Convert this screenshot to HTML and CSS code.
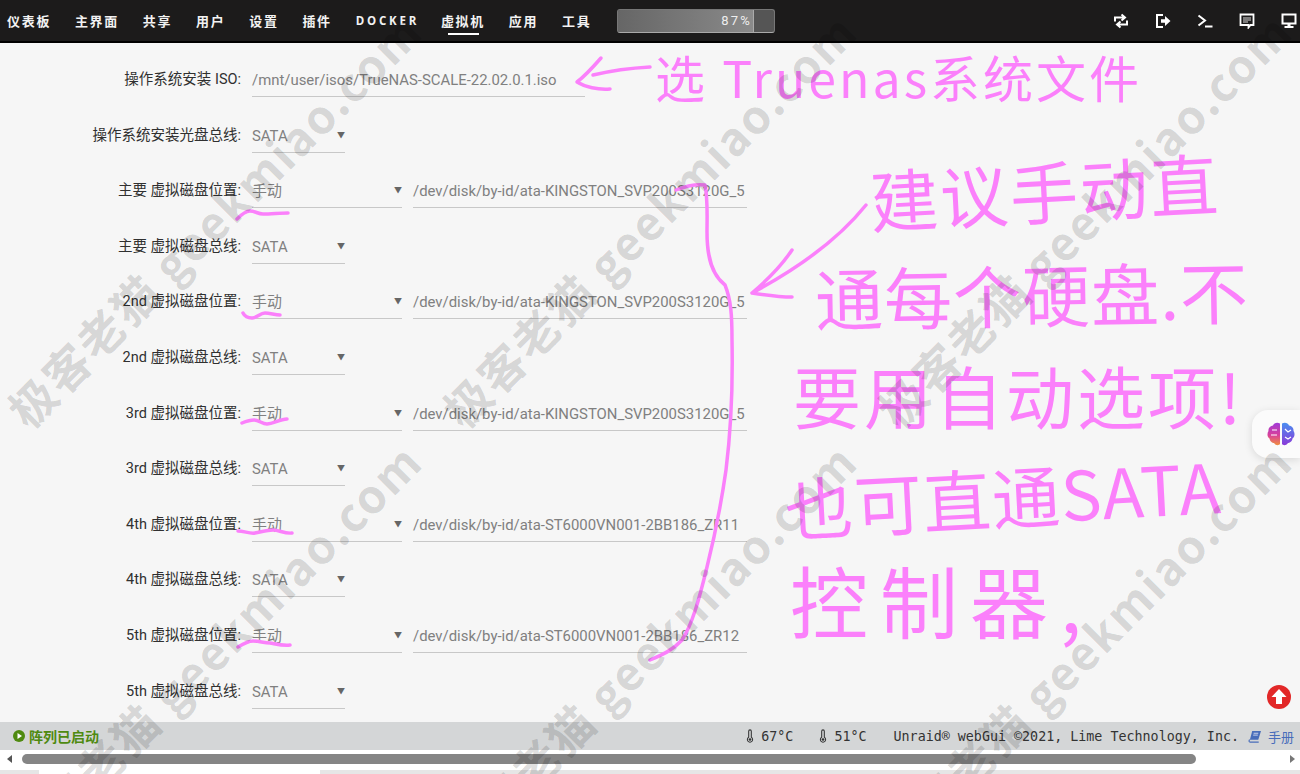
FILE: index.html
```html
<!DOCTYPE html>
<html lang="zh-CN">
<head>
    <meta charset="UTF-8">
    <meta name="viewport" content="width=device-width, initial-scale=1.0">
    <title>虚拟机</title>
    <link rel="stylesheet" href="styles.css">
</head>
<body>
    <div id="page">
        <header id="nav">
            <a class="tab">仪表板</a>
            <a class="tab">主界面</a>
            <a class="tab">共享</a>
            <a class="tab">用户</a>
            <a class="tab">设置</a>
            <a class="tab">插件</a>
            <a class="tab tab-latin">DOCKER</a>
            <a class="tab tab-active">虚拟机</a>
            <a class="tab">应用</a>
            <a class="tab">工具</a>
            <div id="usage"><div id="usage-fill">87%</div></div>
            <div id="nav-icons">
                <svg viewBox="0 0 16 16" class="nav-icon"><path d="M2 8.500V4.500h8.500M8.500 1.500 12 4.500 8.500 7.500M14 7.500v4H5.500M7.500 14.500 4 11.500l3.500-3" fill="none" stroke="#fff" stroke-width="2"/></svg>
                <svg viewBox="0 0 16 16" class="nav-icon"><path d="M8 2H2v12h6" fill="none" stroke="#fff" stroke-width="2"/><path d="M6 6.300h4V3l5.500 5-5.500 5V9.700H6z" fill="#fff"/></svg>
                <svg viewBox="0 0 16 16" class="nav-icon"><path d="M1.500 2.500 8 7.500 1.500 12.500" fill="none" stroke="#fff" stroke-width="2"/><path d="M8 12.500h7.500v2H8z" fill="#fff"/></svg>
                <svg viewBox="0 0 16 16" class="nav-icon"><path d="M1.500 1.500h13v10.500h-3l-2 2.500V12h-8z" fill="none" stroke="#fff" stroke-width="1.800"/><path d="M4 4.500h8v1H4zM4 6.500h8v1H4zM4 8.500h5v1H4z" fill="#ddd"/></svg>
                <svg viewBox="0 0 16 16" class="nav-icon"><path d="M1.500 1.500h13v9h-13z" fill="none" stroke="#fff" stroke-width="2"/><path d="M6.500 11h3v2h-3zM3.500 13h9v2h-9z" fill="#fff"/></svg>
            </div>
        </header>

        <main id="form">
            <div class="row">
                <label>操作系统安装 ISO:</label>
                <div class="field field-iso">/mnt/user/isos/TrueNAS-SCALE-22.02.0.1.iso</div>
            </div>
            <div class="row">
                <label>操作系统安装光盘总线:</label>
                <div class="field field-bus">SATA<span class="caret">▼</span></div>
            </div>
            <div class="row">
                <label>主要 虚拟磁盘位置:</label>
                <div class="field field-loc">手动<span class="caret">▼</span></div>
                <div class="field field-path">/dev/disk/by-id/ata-KINGSTON_SVP200S3120G_5</div>
            </div>
            <div class="row">
                <label>主要 虚拟磁盘总线:</label>
                <div class="field field-bus">SATA<span class="caret">▼</span></div>
            </div>
            <div class="row">
                <label>2nd 虚拟磁盘位置:</label>
                <div class="field field-loc">手动<span class="caret">▼</span></div>
                <div class="field field-path">/dev/disk/by-id/ata-KINGSTON_SVP200S3120G_5</div>
            </div>
            <div class="row">
                <label>2nd 虚拟磁盘总线:</label>
                <div class="field field-bus">SATA<span class="caret">▼</span></div>
            </div>
            <div class="row">
                <label>3rd 虚拟磁盘位置:</label>
                <div class="field field-loc">手动<span class="caret">▼</span></div>
                <div class="field field-path">/dev/disk/by-id/ata-KINGSTON_SVP200S3120G_5</div>
            </div>
            <div class="row">
                <label>3rd 虚拟磁盘总线:</label>
                <div class="field field-bus">SATA<span class="caret">▼</span></div>
            </div>
            <div class="row">
                <label>4th 虚拟磁盘位置:</label>
                <div class="field field-loc">手动<span class="caret">▼</span></div>
                <div class="field field-path">/dev/disk/by-id/ata-ST6000VN001-2BB186_ZR11</div>
            </div>
            <div class="row">
                <label>4th 虚拟磁盘总线:</label>
                <div class="field field-bus">SATA<span class="caret">▼</span></div>
            </div>
            <div class="row">
                <label>5th 虚拟磁盘位置:</label>
                <div class="field field-loc">手动<span class="caret">▼</span></div>
                <div class="field field-path">/dev/disk/by-id/ata-ST6000VN001-2BB186_ZR12</div>
            </div>
            <div class="row">
                <label>5th 虚拟磁盘总线:</label>
                <div class="field field-bus">SATA<span class="caret">▼</span></div>
            </div>
        </main>

        <footer id="status">
            <svg viewBox="0 0 12 12" class="status-icon"><circle cx="6" cy="6" r="6" fill="#4f8a10"/><path d="M4.500 3 9 6 4.500 9z" fill="#fff"/></svg>
            <span id="array">阵列已启动</span>
            <div id="status-right">
                <svg viewBox="0 0 8 16" class="thermo"><path d="M2.500 9.500V2.500a1.500 1.500 0 0 1 3 0v7a3 3 0 1 1-3 0z" fill="none" stroke="#333" stroke-width="1.200"/><circle cx="4" cy="12" r="1.500" fill="#333"/></svg>
                <span class="temp">67°C</span>
                <svg viewBox="0 0 8 16" class="thermo"><path d="M2.500 9.500V2.500a1.500 1.500 0 0 1 3 0v7a3 3 0 1 1-3 0z" fill="none" stroke="#333" stroke-width="1.200"/><circle cx="4" cy="12" r="1.500" fill="#333"/></svg>
                <span class="temp">51°C</span>
                <span id="copyright">Unraid® webGui ©2021, Lime Technology, Inc.</span>
                <svg viewBox="0 0 14 14" class="book"><path d="M4 1h9.500L10.500 10.500H1.500z" fill="#486dba"/><path d="M1.500 10.500a1.300 1.300 0 0 0 0 2.500H11" fill="none" stroke="#486dba" stroke-width="1.200"/><path d="M5.500 3.500h5M5 5.500h5" stroke="#cfd8ee"/></svg>
                <a id="manual">手册</a>
            </div>
        </footer>

        <div id="hscroll">
            <span class="arrow-left"></span>
            <div id="thumb"></div>
            <span class="arrow-right"></span>
        </div>
        <div id="strip"><div id="strip-tab"></div></div>
    </div>

    <!-- handwritten notes on top of the page -->
    <svg id="ink" viewBox="0 0 1300 774">
        <path d="M601 58C594 66 585 76 577 82C585 87 598 90 610 89"/>
        <path d="M593 75C610 71 632 68 650 67"/>
        <path d="M237 219C242 214 246 211 250 211C255 211 258 214 263 214C271 214 280 213 288 213"/>
        <path d="M243 313C245 317 248 318 252 318C257 318 260 313 265 313C270 313 275 315 280 315"/>
        <path d="M242 423C247 421 250 420 254 420C259 420 262 424 267 424C273 424 280 419 287 419"/>
        <path d="M238 531C244 531 250 534 255 533C261 532 267 530 273 530C279 530 285 534 292 533"/>
        <path d="M238 647C243 644 248 641 253 641C259 641 264 643 270 643C276 644 283 646 290 645"/>
        <path d="M676 190C686 186 696 184 705 185C708 200 707 215 707 232C707 258 712 275 725 285C731 300 732 315 732 340C733 390 731 430 726 470C721 505 715 535 707 567C699 600 692 625 682 640C673 650 662 655 650 660"/>
        <path d="M866 205C838 240 795 270 752 293M792 250C782 265 765 282 752 293C765 295 780 297 792 297"/>
    </svg>

    <div id="note-top">选 Truenas系统文件</div>
    <div id="note">
        <div class="note-line note-a">建议手动直</div>
        <div class="note-line note-b">通每个硬盘.不</div>
        <div class="note-line note-c">要用自动选项!</div>
        <div class="note-line note-d">也可直通SATA</div>
        <div class="note-line note-e">控制器,</div>
    </div>

    <a id="to-top">
        <svg viewBox="0 0 24 24"><circle cx="12" cy="12" r="12" fill="#e22828"/><path d="M12 4 19.500 12H15v7H9v-7H4.500z" fill="#fff"/></svg>
    </a>

    <div id="side-widget">
        <svg viewBox="0 0 28 24" class="brain">
            <defs>
                <linearGradient id="brain-l" x1="0" y1="0" x2="0" y2="1"><stop offset="0" stop-color="#a03ad8"/><stop offset=".55" stop-color="#d8409a"/><stop offset="1" stop-color="#f09040"/></linearGradient>
                <linearGradient id="brain-r" x1="0" y1="0" x2="0" y2="1"><stop offset="0" stop-color="#4a8ef0"/><stop offset="1" stop-color="#8a3ad8"/></linearGradient>
            </defs>
            <path d="M13 1.500C10 0 7 1 6 3.500C3 4 1 6.500 1.500 9C0 11 0 15 2.500 16.500C3 20 6 21 7 21C9 24 12 23.500 13 22z" fill="url(#brain-l)"/>
            <path d="M15 1.500C18 0 21 1 22 3.500C25 4 27 6.500 26.500 9C28 11 28 15 25.500 16.500C25 20 22 21 21 21C19 24 16 23.500 15 22z" fill="url(#brain-r)"/>
            <path d="M5 8h5M4 13h6M18 7l3 3 3-2M18 15l3 2 3-2" fill="none" stroke="#fff" stroke-width="1.200"/>
        </svg>
    </div>

    <div id="marks">
        <span class="mark">极客老猫 geekmiao.com</span>
        <span class="mark">极客老猫 geekmiao.com</span>
        <span class="mark">极客老猫 geekmiao.com</span>
        <span class="mark">极客老猫 geekmiao.com</span>
        <span class="mark">极客老猫 geekmiao.com</span>
        <span class="mark">极客老猫 geekmiao.com</span>
    </div>
</body>
</html>
```

FILE: styles.css
```css
html, body {
    margin: 0;
    height: 100%;
    overflow: hidden;
}
body {
    position: relative;
    width: 1300px;
    height: 774px;
    background: #f6f6f6;
    color: #303030;
    font-family: Roboto, "Noto Sans CJK SC", sans-serif;
    font-size: 14.500px;
}
#page {
    display: flex;
    flex-direction: column;
    height: 774px;
}

/* top bar */
#nav {
    display: flex;
    align-items: center;
    flex: 0 0 41px;
    padding-left: 7px;
    background: #1c1b1b;
    border-bottom: 2px solid #000;
    color: #f2f2f2;
}
.tab {
    position: relative;
    margin-right: 23.800px;
    font-family: "Noto Sans CJK SC", sans-serif;
    font-size: 13px;
    font-weight: 700;
    letter-spacing: 1.700px;
    line-height: 41px;
}
.tab-latin {
    margin-right: 21.800px;
    font-family: "Open Sans", sans-serif;
    font-size: 11.500px;
    letter-spacing: 2.800px;
}
.tab-active::after {
    content: "";
    position: absolute;
    left: 7px;
    right: 6px;
    bottom: 6px;
    height: 2px;
    background: #fff;
}
#usage {
    width: 158px;
    height: 24px;
    margin-left: 2px;
    background: #555;
    border-radius: 3px;
    border: 1px solid #777;
    border-bottom-color: #aaa;
    box-sizing: border-box;
    overflow: hidden;
}
#usage-fill {
    width: 87%;
    height: 100%;
    background: linear-gradient(90deg, #666, #8a8a8a);
    border-right: 1px solid #aaa;
    color: #eee;
    font-size: 13px;
    line-height: 21px;
    letter-spacing: 2.200px;
    text-align: right;
    padding-right: 1px;
    box-sizing: border-box;
}
#nav-icons {
    display: flex;
    gap: 26px;
    margin-left: auto;
    padding-right: 3px;
}
.nav-icon {
    width: 16px;
    height: 16px;
}

/* form */
#form {
    flex: 1;
    padding-top: 20px;
    overflow: hidden;
}
.row {
    display: flex;
    align-items: flex-start;
    height: 55.600px;
}
.row label {
    width: 241px;
    text-align: right;
    line-height: 34px;
    white-space: nowrap;
}
.field {
    position: relative;
    box-sizing: border-box;
    height: 34px;
    margin-left: 11px;
    border-bottom: 1px solid #c8c8c8;
    color: #808080;
    font-size: 14.900px;
    line-height: 34px;
    white-space: nowrap;
}
.field-iso {
    width: 333px;
}
.field-bus {
    width: 93px;
}
.field-loc {
    width: 150px;
}
.field-path {
    width: 334px;
}
.caret {
    position: absolute;
    right: 0;
    top: 0;
    font-size: 8px;
    color: #666;
}

/* bottom bar */
#status {
    display: flex;
    align-items: center;
    flex: 0 0 28px;
    padding-left: 13px;
    background: #d4d6d7;
}
.status-icon {
    width: 12px;
    height: 12px;
    margin-right: 4px;
}
#array {
    color: #4f8a10;
    font-family: "Noto Sans CJK SC", sans-serif;
    font-size: 14px;
    font-weight: 700;
}
#status-right {
    display: flex;
    align-items: center;
    margin-left: auto;
    padding-right: 6px;
    font-family: "DejaVu Sans Mono", monospace;
    font-size: 13.350px;
    color: #333;
}
.thermo {
    width: 8px;
    height: 14px;
    margin-right: 7px;
}
.temp {
    margin-right: 26px;
}
.temp + .thermo + .temp {
    margin-right: 27px;
}
#copyright {
    margin-right: 9px;
}
.book {
    width: 14px;
    height: 13px;
    margin-right: 6px;
}
#manual {
    color: #486dba;
    font-family: "Noto Sans CJK SC", sans-serif;
    font-size: 13px;
}
#hscroll {
    display: flex;
    align-items: center;
    flex: 0 0 18px;
    padding: 0 4px;
    background: #fff;
    box-sizing: border-box;
}
#thumb {
    width: 1174px;
    height: 10px;
    margin-left: 10px;
    background: #858585;
    border-radius: 5px;
}
.arrow-left {
    border: 4px solid transparent;
    border-left: 0;
    border-right: 5px solid #555;
    margin-left: 3px;
}
.arrow-right {
    margin-left: auto;
    margin-right: 1px;
    border: 4px solid transparent;
    border-right: 0;
    border-left: 5px solid #777;
}
#strip {
    flex: 0 0 6px;
    background: #e6e6e6;
    border-top: 2px solid #fff;
    box-sizing: border-box;
}
#strip-tab {
    width: 281px;
    height: 4px;
    margin-left: 39px;
    background: #fff;
}

/* ink */
#ink {
    position: absolute;
    left: 0;
    top: 0;
    width: 1300px;
    height: 774px;
}
#ink path {
    fill: none;
    stroke: #fb80fb;
    stroke-width: 3.500;
    stroke-linecap: round;
    stroke-linejoin: round;
}
#note-top, #note {
    color: #fb80fb;
    font-family: "Noto Sans CJK SC", sans-serif;
}
#note-top {
    position: absolute;
    left: 655px;
    top: 44px;
    font-size: 50px;
    line-height: 64px;
    letter-spacing: 3px;
    white-space: nowrap;
}
#note {
    position: absolute;
    left: 785px;
    top: 150px;
    display: flex;
    flex-direction: column;
    white-space: nowrap;
}
.note-line {
    height: 98px;
    line-height: 98px;
    transform-origin: 0 50%;
}
.note-a {
    margin-left: 85px;
    font-size: 68px;
    letter-spacing: 2px;
    transform: rotate(-3deg);
}
.note-b {
    margin-left: 30px;
    font-size: 68px;
    letter-spacing: 1px;
    transform: rotate(-1deg);
}
.note-c {
    margin-left: 8px;
    font-size: 68px;
    letter-spacing: 3px;
}
.note-d {
    margin-top: 14px;
    font-size: 68px;
    letter-spacing: 1px;
    transform: rotate(-3deg);
}
.note-e {
    margin-top: -6px;
    margin-left: 5px;
    font-size: 78px;
    letter-spacing: 12px;
}

#to-top {
    position: absolute;
    left: 1267px;
    top: 685px;
    width: 24px;
    height: 24px;
}
#side-widget {
    position: absolute;
    right: 0;
    top: 410px;
    display: flex;
    align-items: center;
    width: 48px;
    height: 48px;
    padding-left: 15px;
    box-sizing: border-box;
    background: #fbfbfb;
    border-radius: 16px 0 0 16px;
    box-shadow: 0 2px 8px rgba(0, 0, 0, .12);
}
.brain {
    width: 28px;
    height: 24px;
}

/* watermark */
#marks {
    position: absolute;
    left: 0;
    top: 0;
    width: 1300px;
    height: 774px;
    box-sizing: border-box;
    padding: 392px 0 0 15px;
    overflow: hidden;
    display: grid;
    grid-template-columns: repeat(3, 435px);
    grid-auto-rows: 430px;
    pointer-events: none;
}
.mark {
    display: block;
    height: 50px;
    width: 0;
    color: rgba(0, 0, 0, .14);
    font-family: "Noto Sans CJK SC", "Noto Sans", sans-serif;
    font-size: 46px;
    font-weight: 700;
    line-height: 50px;
    letter-spacing: 2px;
    white-space: nowrap;
    transform: rotate(-45deg);
    transform-origin: 0 50%;
}
```
